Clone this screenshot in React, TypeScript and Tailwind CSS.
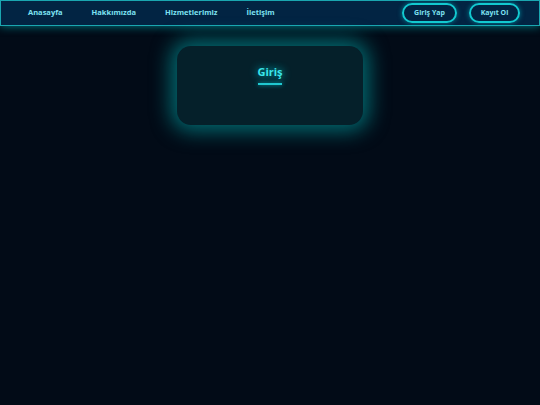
export default function App() {
  const links = ['Anasayfa', 'Hakkımızda', 'Hizmetlerimiz', 'İletişim'];
  return (
    <div className="min-h-[405px] w-full bg-[#020b17] font-['Open_Sans','Noto_Sans',sans-serif]">
      <nav className="flex h-[26px] items-center justify-between border border-[#1aa6b0] bg-[#022443] px-[27px] shadow-[0_0_10px_rgba(0,220,230,0.55)]">
        <ul className="flex items-center gap-[29px]">
          {links.map((l) => (
            <li key={l} className="text-[7.5px] font-bold text-[#7ee2f2]">
              {l}
            </li>
          ))}
        </ul>
        <div className="mr-[-8px] flex items-center gap-[12px]">
          <button className="flex h-[20px] w-[55px] items-center justify-center rounded-full border-2 border-[#12c9d0] text-[7px] font-bold text-[#7ee2f2] shadow-[0_0_5px_rgba(0,220,230,0.5)]">
            Giriş Yap
          </button>
          <button className="flex h-[20px] w-[51px] items-center justify-center rounded-full border-2 border-[#12c9d0] text-[7px] font-bold text-[#7ee2f2] shadow-[0_0_5px_rgba(0,220,230,0.5)]">
            Kayıt Ol
          </button>
        </div>
      </nav>

      <div className="flex justify-center pt-[20px]">
        <div className="flex h-[79px] w-[186px] flex-col items-center rounded-[14px] bg-[#05202a] pt-[18px] shadow-[0_0_20px_6px_rgba(0,200,200,0.5)]">
          <h2 className="text-[11px] font-bold text-[#3ae6ea] [text-shadow:0_0_8px_rgba(0,230,240,0.9)]">
            Giriş
          </h2>
          <div className="mt-[2px] h-[2px] w-[24px] bg-[#20c8d0] shadow-[0_0_4px_rgba(0,230,240,0.7)]" />
        </div>
      </div>
    </div>
  );
}
